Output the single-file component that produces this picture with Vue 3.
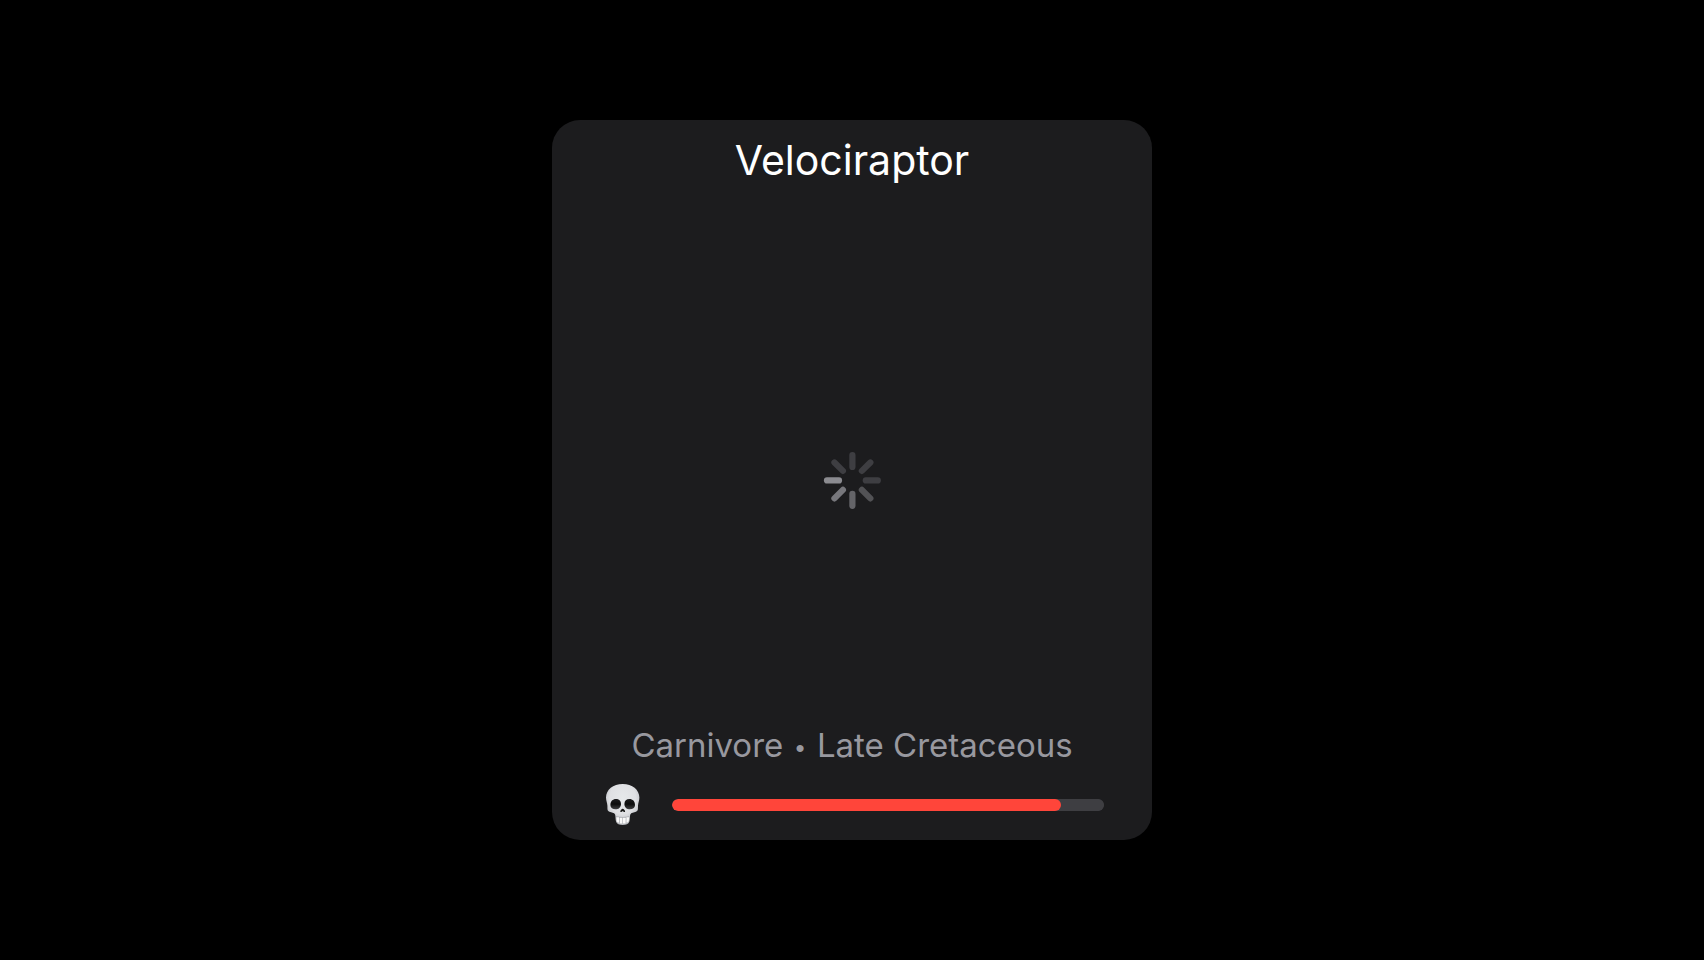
<script setup>
const dinosaur = {
  name: 'Velociraptor',
  diet: 'Carnivore',
  period: 'Late Cretaceous',
  danger: 90,
}

const spokes = [
  { angle: 0, color: '#3e3e42' },
  { angle: 45, color: '#3e3e42' },
  { angle: 90, color: '#3e3e42' },
  { angle: 135, color: '#525255' },
  { angle: 180, color: '#646468' },
  { angle: 225, color: '#77777c' },
  { angle: 270, color: '#8b8b90' },
  { angle: 315, color: '#3e3e42' },
]
</script>

<template>
  <main class="screen">
    <article class="card">
      <h1 class="name">{{ dinosaur.name }}</h1>

      <div class="picture" role="status" aria-label="Loading">
        <svg class="spinner" viewBox="-30.4 -30.4 60 60" aria-hidden="true">
          <rect
            v-for="spoke in spokes"
            :key="spoke.angle"
            x="-3.1"
            y="-28.5"
            width="6.2"
            height="18.2"
            rx="3.1"
            :fill="spoke.color"
            :transform="`rotate(${spoke.angle})`"
          />
        </svg>
      </div>

      <footer class="details">
        <p class="facts">{{ dinosaur.diet }} <span class="dot">•</span> {{ dinosaur.period }}</p>

        <div class="danger">
          <svg class="skull" viewBox="0 0 36 44" aria-hidden="true">
            <defs>
              <radialGradient id="bone" cx="0.5" cy="0.35" r="0.65">
                <stop offset="0" stop-color="#e6e8ea" />
                <stop offset="0.6" stop-color="#dfe0e3" />
                <stop offset="1" stop-color="#b4b6bb" />
              </radialGradient>
              <linearGradient id="socket" x1="0" y1="0" x2="0" y2="1">
                <stop offset="0" stop-color="#1c1c1e" />
                <stop offset="0.5" stop-color="#0c0c0c" />
                <stop offset="1" stop-color="#404042" />
              </linearGradient>
            </defs>
            <path
              d="M17.700 1C8.100 1 1 6.700 1 14.600c0 3.400 1.300 5.400 1.400 8.200.1 2.800-.4 5 2 6 2 .9 4.900.6 5.700 2.600.6 1.700.3 5.100 1 7.300.8 2.400 3.200 3.200 6.600 3.200s5.800-.8 6.600-3.200c.7-2.200.4-5.600 1-7.300.8-2 3.700-1.700 5.700-2.600 2.400-1 1.900-3.200 2-6 .1-2.800 1.400-4.800 1.400-8.200C34.400 6.700 27.300 1 17.700 1Z"
              fill="url(#bone)"
            />
            <path d="M11 33.300q6.700 1.600 13.400 0l-.5 5.600q-6.200 3-12.400 0Z" fill="#a9abb0" />
            <path
              d="M11.300 34.300h2.700v5.400q-2.100-.2-2.400-1.700ZM14.600 34.700h2.800v5.700h-2.600ZM18 34.700h2.800l-.2 5.700H18ZM21.400 34.300h2.700l-.3 3.700q-.3 1.500-2.400 1.700Z"
              fill="#fafafa"
            />
            <path
              d="M5.400 22.200c-.1-4 2.400-6.200 5.500-6.200 3.100 0 5.100 1.900 5.100 4.900 0 3.600-2.600 5.400-5.500 5.400s-5-1.300-5.100-4.100Z"
              fill="url(#socket)"
            />
            <path
              d="M30 22.200c.1-4-2.400-6.200-5.500-6.200-3.100 0-5.100 1.900-5.100 4.900 0 3.600 2.600 5.400 5.500 5.400s5-1.300 5.100-4.100Z"
              fill="url(#socket)"
            />
            <path
              d="M17.700 25.800c-.9 0-2.400 1.700-2.400 2.600 0 .8 1.400.8 1.900.2l.5-.6.5.6c.5.6 1.900.6 1.900-.2 0-.9-1.500-2.600-2.400-2.600Z"
              fill="#161616"
            />
          </svg>
          <progress class="meter" :value="dinosaur.danger" max="100" aria-label="Danger"></progress>
        </div>
      </footer>
    </article>
  </main>
</template>

<style>
body {
  margin: 0;
  background: #000;
}
</style>

<style scoped>
.screen {
  display: flex;
  align-items: center;
  justify-content: center;
  box-sizing: border-box;
  min-height: 100vh;
  padding: 24px;
  font-family: Inter, 'Liberation Sans', sans-serif;
}

.card {
  display: grid;
  grid-template-rows: 1fr auto 1fr;
  box-sizing: border-box;
  width: 100%;
  max-width: 600px;
  aspect-ratio: 5 / 6;
  padding: 13px 48px;
  border-radius: 28px;
  background: #1c1c1e;
}

.name {
  margin: 0;
  color: #fff;
  font-size: 41px;
  font-weight: 400;
  line-height: 54px;
  text-align: center;
}

.picture {
  display: flex;
  justify-content: center;
}

.spinner {
  width: 60px;
  height: 60px;
}

.details {
  display: flex;
  flex-direction: column;
  align-self: end;
  gap: 18px;
}

.facts {
  margin: 0;
  color: #98989f;
  font-size: 33px;
  line-height: 40px;
  text-align: center;
  white-space: nowrap;
}

.dot {
  margin: 0 3px;
  font-family: 'Liberation Sans', sans-serif;
  font-size: 26px;
  line-height: 1;
}

.danger {
  display: flex;
  align-items: center;
  gap: 31px;
  padding-left: 5px;
}

.skull {
  flex: none;
  width: 36px;
  height: 44px;
}

.meter {
  flex: 1;
  min-width: 0;
  height: 12px;
  border: 0;
  border-radius: 6px;
  overflow: hidden;
  background: #3e3e42;
  appearance: none;
}

.meter::-webkit-progress-bar {
  border-radius: 6px;
  background: #3e3e42;
}

.meter::-webkit-progress-value {
  border-radius: 6px;
  background: #ff453a;
}
</style>
